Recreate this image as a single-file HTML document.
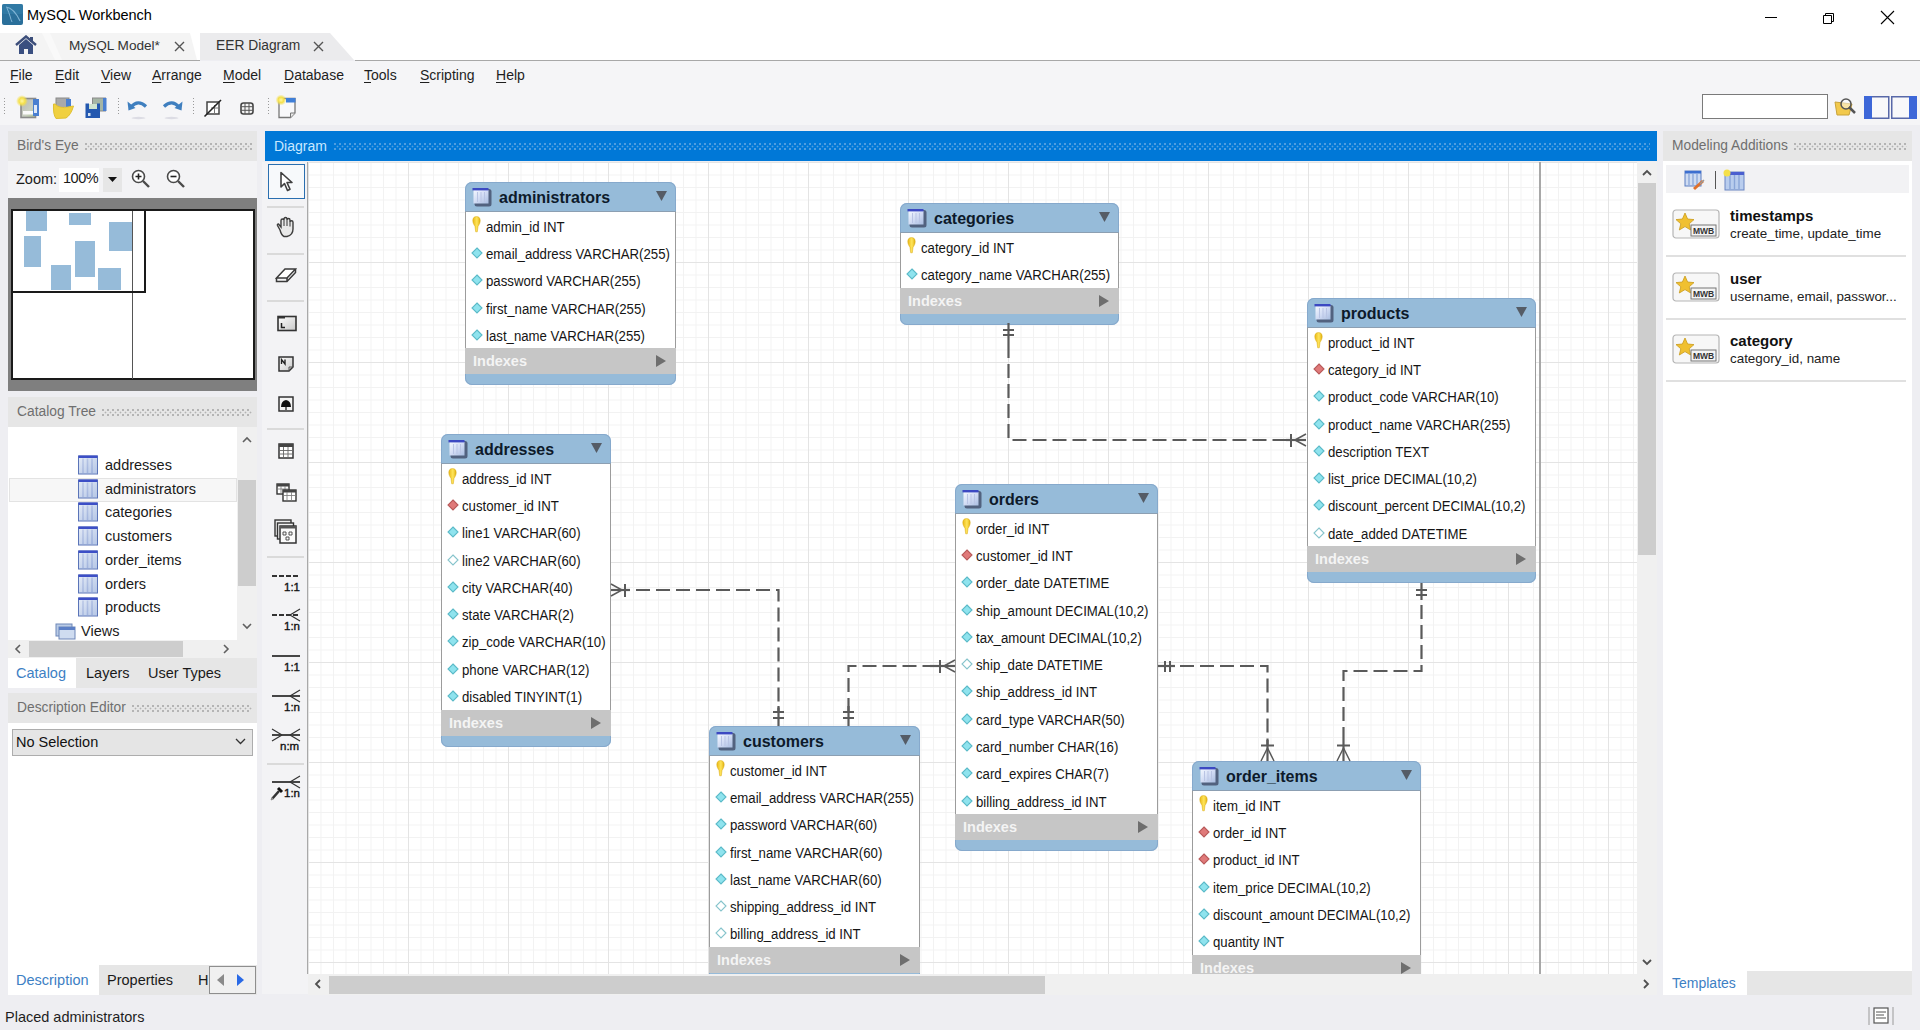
<!DOCTYPE html><html><head><meta charset="utf-8"><title>MySQL Workbench</title><style>
*{margin:0;padding:0;box-sizing:border-box}
html,body{width:1920px;height:1030px;overflow:hidden;background:#eeeef2;font-family:"Liberation Sans",sans-serif;color:#000}
.a{position:absolute}
.t{position:absolute;white-space:nowrap;line-height:1}
</style></head><body><div class="a" style="left:0px;top:0px;width:1920px;height:33px;background:#fff"></div><svg class="a" style="left:2px;top:4px" width="21" height="21" viewBox="0 0 21 21">
<rect x="0" y="0" width="21" height="21" rx="2" fill="#2a6f9a"/>
<rect x="0" y="0" width="21" height="10" rx="2" fill="#3580ac" opacity=".6"/>
<path d="M4 3 Q12 4 18 17" stroke="#7fb3d4" stroke-width="1.2" fill="none"/>
<path d="M5 4 Q7 9 8 12 Q9 16 10 18" stroke="#7fb3d4" stroke-width="1" fill="none"/>
</svg><div class="t" style="left:27px;top:8px;font-size:14.5px;color:#000">MySQL Workbench</div><div class="a" style="left:1765px;top:17px;width:12px;height:1px;background:#000"></div><svg class="a" style="left:1822px;top:11px" width="14" height="14" viewBox="0 0 14 14"><path d="M1.5 4.5h8v8h-8z M3.5 4.5v-2h8v8h-2" fill="none" stroke="#000" stroke-width="1"/></svg><svg class="a" style="left:1880px;top:10px" width="15" height="15" viewBox="0 0 15 15"><path d="M1 1L14 14M14 1L1 14" stroke="#000" stroke-width="1.1"/></svg><div class="a" style="left:0px;top:33px;width:1920px;height:27px;background:#fff"></div><svg class="a" style="left:0;top:33px" width="380" height="28" viewBox="0 0 380 28">
<path d="M0 0 H190 L197 27 H0 Z" fill="#f4f4f4"/>
<path d="M42 0 H50 L62 27 H55 Z" fill="#f9f9f9"/>
<path d="M200 0 H330 L354 27 H200 Z" fill="#ebebed"/>
</svg><div class="a" style="left:0px;top:60px;width:200px;height:1px;background:#a8a8a8"></div><div class="a" style="left:355px;top:60px;width:1565px;height:1px;background:#a8a8a8"></div><svg class="a" style="left:15px;top:35px" width="22" height="20" viewBox="0 0 22 20">
<path d="M1 10 L11 1.5 L21 10" fill="none" stroke="#3c4e7a" stroke-width="2.4"/>
<path d="M4 10 L11 4 L18 10 V19 H13 V14 H9 V19 H4 Z" fill="#3a4f80"/>
<rect x="15" y="2" width="3" height="5" fill="#3c4e7a"/>
</svg><div class="t" style="left:69px;top:39px;font-size:13.6px;color:#333">MySQL Model*</div><svg class="a" style="left:174px;top:41px" width="11" height="11" viewBox="0 0 11 11"><path d="M1 1L10 10M10 1L1 10" stroke="#555" stroke-width="1.4"/></svg><div class="t" style="left:216px;top:39px;font-size:13.8px;color:#333">EER Diagram</div><svg class="a" style="left:313px;top:41px" width="11" height="11" viewBox="0 0 11 11"><path d="M1 1L10 10M10 1L1 10" stroke="#555" stroke-width="1.4"/></svg><div class="a" style="left:0px;top:61px;width:1920px;height:64px;background:#f5f5f7"></div><div class="t" style="left:10px;top:68px;font-size:14px;color:#1e1e1e"><u style="text-decoration-thickness:1px;text-underline-offset:2px">F</u>ile</div><div class="t" style="left:55px;top:68px;font-size:14px;color:#1e1e1e"><u style="text-decoration-thickness:1px;text-underline-offset:2px">E</u>dit</div><div class="t" style="left:101px;top:68px;font-size:14px;color:#1e1e1e"><u style="text-decoration-thickness:1px;text-underline-offset:2px">V</u>iew</div><div class="t" style="left:152px;top:68px;font-size:14px;color:#1e1e1e"><u style="text-decoration-thickness:1px;text-underline-offset:2px">A</u>rrange</div><div class="t" style="left:223px;top:68px;font-size:14px;color:#1e1e1e"><u style="text-decoration-thickness:1px;text-underline-offset:2px">M</u>odel</div><div class="t" style="left:284px;top:68px;font-size:14px;color:#1e1e1e"><u style="text-decoration-thickness:1px;text-underline-offset:2px">D</u>atabase</div><div class="t" style="left:364px;top:68px;font-size:14px;color:#1e1e1e"><u style="text-decoration-thickness:1px;text-underline-offset:2px">T</u>ools</div><div class="t" style="left:420px;top:68px;font-size:14px;color:#1e1e1e"><u style="text-decoration-thickness:1px;text-underline-offset:2px">S</u>cripting</div><div class="t" style="left:496px;top:68px;font-size:14px;color:#1e1e1e"><u style="text-decoration-thickness:1px;text-underline-offset:2px">H</u>elp</div><div class="a" style="left:4px;top:98px;width:1px;height:18px;background-image:linear-gradient(#9a9a9a 50%,transparent 50%);background-size:1px 3px"></div><div class="a" style="left:118px;top:98px;width:1px;height:18px;background-image:linear-gradient(#9a9a9a 50%,transparent 50%);background-size:1px 3px"></div><div class="a" style="left:193px;top:98px;width:1px;height:18px;background-image:linear-gradient(#9a9a9a 50%,transparent 50%);background-size:1px 3px"></div><div class="a" style="left:268px;top:98px;width:1px;height:18px;background-image:linear-gradient(#9a9a9a 50%,transparent 50%);background-size:1px 3px"></div><svg width="0" height="0" style="position:absolute"><defs>
<linearGradient id="tg1" x1="0" y1="0" x2="1" y2="1"><stop offset="0" stop-color="#b8b8b8"/><stop offset=".6" stop-color="#c9cfc0"/><stop offset="1" stop-color="#a8c090"/></linearGradient>
<radialGradient id="star" cx=".5" cy=".5" r=".5"><stop offset="0" stop-color="#fff7a0"/><stop offset=".5" stop-color="#f5e04a"/><stop offset="1" stop-color="#f5e04a" stop-opacity="0"/></radialGradient>
</defs></svg><svg class="a" style="left:16px;top:95px" width="26" height="26" viewBox="0 0 26 26">
<rect x="5" y="3.5" width="14.5" height="19" fill="url(#tg1)" stroke="#8a8a8a" stroke-width="1.6"/><rect x="7" y="16" width="11" height="3.5" fill="#fafafa"/>
<rect x="17" y="4" width="6" height="17" fill="#4a7fd0"/><rect x="18" y="10" width="3" height="8" fill="#dfe9f7"/>
<circle cx="6" cy="6" r="6" fill="url(#star)"/></svg><svg class="a" style="left:51px;top:95px" width="24" height="26" viewBox="0 0 24 26">
<rect x="5" y="3" width="13" height="13" fill="#a9a9a9" stroke="#8a8a8a"/><rect x="15" y="4" width="5" height="9" fill="#4a7fd0"/><rect x="8" y="12" width="9" height="3" fill="#e8eadc"/>
<path d="M2.5 9 Q2 20 5 23.5 L15 23 Q20 20 22.5 11 L17 12 Q9 14 4 9Z" fill="#f0d040" stroke="#e0c030" stroke-width="1"/></svg><svg class="a" style="left:84px;top:95px" width="24" height="26" viewBox="0 0 24 26">
<rect x="8.5" y="3" width="13" height="13" fill="#a5b5a5" stroke="#8a8a8a"/><rect x="19" y="3" width="3.5" height="13" fill="#4a7fd0"/>
<path d="M1.5 8.5H5V14H13V8.5H16V23H1.5Z" fill="#2458b0"/><rect x="5" y="9" width="8" height="5" fill="#cfe4d0"/><rect x="4" y="18" width="2.5" height="3" fill="#d0dff2"/></svg><svg class="a" style="left:126px;top:98px" width="24" height="24" viewBox="0 0 24 24">
<path d="M5 9 Q12 1 20 8.5" stroke="#3f7fbf" stroke-width="3.2" fill="none"/><path d="M1.5 3.5 L2.5 12.5 L9.5 10 Z" fill="#3f7fbf"/>
<ellipse cx="12.5" cy="20" rx="7" ry="1.2" fill="#dcdce4"/></svg><svg class="a" style="left:160px;top:98px" width="24" height="24" viewBox="0 0 24 24">
<path d="M19 9 Q12 1 4 8.5" stroke="#3f7fbf" stroke-width="3.2" fill="none"/><path d="M22.5 3.5 L21.5 12.5 L14.5 10 Z" fill="#3f7fbf"/>
<ellipse cx="11.5" cy="20" rx="7" ry="1.2" fill="#dcdce4"/></svg><svg class="a" style="left:203px;top:99px" width="20" height="19" viewBox="0 0 20 19">
<rect x="4" y="3" width="12" height="12" fill="#fff" stroke="#444" stroke-width="1.5"/><path d="M8 9H15M11.5 6V15" stroke="#777" stroke-width="1"/><path d="M1.5 17.5 L18 1" stroke="#222" stroke-width="1.6"/></svg><svg class="a" style="left:240px;top:102px" width="14" height="13" viewBox="0 0 14 13">
<rect x="1" y="1" width="12" height="11" rx="2.5" fill="#f4f4f4" stroke="#454545" stroke-width="1.6"/><path d="M1 4.7H13M1 8.3H13M5 1V12M9 1V12" stroke="#555" stroke-width="1"/></svg><svg class="a" style="left:275px;top:95px" width="22" height="24" viewBox="0 0 22 24">
<path d="M4 3.5 H20 V18 L15.5 22.5 H4 Z" fill="#f8f8fa" stroke="#777" stroke-width="1.3"/><path d="M15.5 22.5 V18 H20" fill="#e8e8e8" stroke="#777" stroke-width="1"/><rect x="11" y="3" width="9.5" height="4.5" fill="#3f7fd8"/>
<circle cx="6" cy="5" r="5.5" fill="url(#star)"/></svg><div class="a" style="left:1702px;top:94px;width:126px;height:25px;background:#fff;border:1px solid #7a7a7a"></div><svg class="a" style="left:1834px;top:96px" width="24" height="22" viewBox="0 0 24 22">
<path d="M1 6 L3 19 H15 L18 8 Z" fill="#f2c94c" stroke="#c9a33a"/><circle cx="12" cy="8" r="5" fill="#fff" fill-opacity=".5" stroke="#555" stroke-width="1.5"/><path d="M15 11 L21 17" stroke="#555" stroke-width="2.5"/>
</svg><svg class="a" style="left:1864px;top:96px" width="54" height="23" viewBox="0 0 54 23">
<rect x="0.75" y="0.75" width="24" height="21.5" fill="#f8f8fa" stroke="#5868a8" stroke-width="1.5"/><rect x="0" y="0" width="8" height="23" fill="#3d67d8"/>
<rect x="27.75" y="0.75" width="24" height="21.5" fill="#f8f8fa" stroke="#5868a8" stroke-width="1.5"/><rect x="45" y="0" width="8" height="23" fill="#3d67d8"/>
</svg><div class="a" style="left:8px;top:131px;width:249px;height:30px;background:#e6e6e6"></div><div class="t" style="left:17px;top:139px;font-size:13.8px;color:#6f6f6f">Bird's Eye</div><div class="a" style="left:85px;top:143px;width:167px;height:7px;background-image:radial-gradient(circle at 1px 1px,#b4b4b4 0.8px,transparent 1.1px),radial-gradient(circle at 3.5px 3.5px,#b4b4b4 0.8px,transparent 1.1px);background-size:5px 5px"></div><div class="a" style="left:8px;top:161px;width:249px;height:37px;background:#f3f3f5"></div><div class="t" style="left:16px;top:172px;font-size:14.5px;color:#1a1a1a">Zoom:</div><div class="a" style="left:59px;top:168px;width:40px;height:24px;background:#fff"></div><div class="t" style="left:63px;top:171px;font-size:14.5px;color:#1a1a1a;letter-spacing:-0.5px">100%</div><div class="a" style="left:103px;top:168px;width:19px;height:24px;background:#e6e6e6"></div><svg class="a" style="left:108px;top:177px" width="9" height="5"><path d="M0 0H9L4.5 5Z" fill="#111"/></svg><svg class="a" style="left:131px;top:169px" width="20" height="20" viewBox="0 0 20 20">
<circle cx="7.5" cy="7.5" r="6" fill="#fff" stroke="#4a4a4a" stroke-width="1.6"/>
<path d="M12 12L18 18" stroke="#4a4a4a" stroke-width="2.4"/>
<path d="M4.5 7.5H10.5M7.5 4.5V10.5" stroke="#222" stroke-width="1.6"/></svg><svg class="a" style="left:166px;top:169px" width="20" height="20" viewBox="0 0 20 20">
<circle cx="7.5" cy="7.5" r="6" fill="#fff" stroke="#4a4a4a" stroke-width="1.6"/>
<path d="M12 12L18 18" stroke="#4a4a4a" stroke-width="2.4"/>
<path d="M4.5 7.5H10.5" stroke="#222" stroke-width="1.6"/></svg><div class="a" style="left:8px;top:198px;width:249px;height:193px;background:#7f7f7f"></div><div class="a" style="left:11px;top:209px;width:244px;height:171px;background:#fff;border:2px solid #1a1a1a"></div><div class="a" style="left:132px;top:210px;width:1px;height:169px;background:#555"></div><div class="a" style="left:26px;top:211px;width:21px;height:20px;background:#96bbd9"></div><div class="a" style="left:69px;top:213px;width:22px;height:12px;background:#96bbd9"></div><div class="a" style="left:109px;top:222px;width:23px;height:29px;background:#96bbd9"></div><div class="a" style="left:24px;top:236px;width:17px;height:31px;background:#96bbd9"></div><div class="a" style="left:75px;top:241px;width:20px;height:36px;background:#96bbd9"></div><div class="a" style="left:51px;top:265px;width:20px;height:25px;background:#96bbd9"></div><div class="a" style="left:98px;top:268px;width:23px;height:22px;background:#96bbd9"></div><div class="a" style="left:11px;top:209px;width:135px;height:84px;border:2px solid #1a1a1a"></div><div class="a" style="left:8px;top:397px;width:249px;height:30px;background:#e6e6e6"></div><div class="t" style="left:17px;top:405px;font-size:13.8px;color:#6f6f6f">Catalog Tree</div><div class="a" style="left:102px;top:409px;width:150px;height:7px;background-image:radial-gradient(circle at 1px 1px,#b4b4b4 0.8px,transparent 1.1px),radial-gradient(circle at 3.5px 3.5px,#b4b4b4 0.8px,transparent 1.1px);background-size:5px 5px"></div><div class="a" style="left:8px;top:427px;width:249px;height:213px;background:#fff"></div><div class="a" style="left:9px;top:478px;width:228px;height:24px;background:#f7f7f7;border:1px solid #e3e3e3"></div><svg width="0" height="0" style="position:absolute"><defs><linearGradient id="g1" x1="0" y1="0" x2="1" y2="1"><stop offset="0" stop-color="#fff"/><stop offset="1" stop-color="#9fb3dc"/></linearGradient></defs></svg><svg class="a" style="left:78px;top:455px" width="20" height="20" viewBox="0 0 20 20">
<rect x="0.5" y="1" width="19" height="18" fill="#c9d7ee" stroke="#5a74b8" stroke-width="1"/>
<rect x="0.5" y="0.5" width="19" height="2.5" fill="#3d4fc6"/>
<path d="M5 3.5V18M9.5 3.5V18M14 3.5V18" stroke="#8ea4d6" stroke-width="1.6"/>
<rect x="1" y="3" width="18" height="15" fill="url(#g1)" opacity=".45"/>
</svg><div class="t" style="left:105px;top:458px;font-size:14.5px;color:#1a1a1a">addresses</div><svg class="a" style="left:78px;top:479px" width="20" height="20" viewBox="0 0 20 20">
<rect x="0.5" y="1" width="19" height="18" fill="#c9d7ee" stroke="#5a74b8" stroke-width="1"/>
<rect x="0.5" y="0.5" width="19" height="2.5" fill="#3d4fc6"/>
<path d="M5 3.5V18M9.5 3.5V18M14 3.5V18" stroke="#8ea4d6" stroke-width="1.6"/>
<rect x="1" y="3" width="18" height="15" fill="url(#g1)" opacity=".45"/>
</svg><div class="t" style="left:105px;top:482px;font-size:14.5px;color:#1a1a1a">administrators</div><svg class="a" style="left:78px;top:502px" width="20" height="20" viewBox="0 0 20 20">
<rect x="0.5" y="1" width="19" height="18" fill="#c9d7ee" stroke="#5a74b8" stroke-width="1"/>
<rect x="0.5" y="0.5" width="19" height="2.5" fill="#3d4fc6"/>
<path d="M5 3.5V18M9.5 3.5V18M14 3.5V18" stroke="#8ea4d6" stroke-width="1.6"/>
<rect x="1" y="3" width="18" height="15" fill="url(#g1)" opacity=".45"/>
</svg><div class="t" style="left:105px;top:505px;font-size:14.5px;color:#1a1a1a">categories</div><svg class="a" style="left:78px;top:526px" width="20" height="20" viewBox="0 0 20 20">
<rect x="0.5" y="1" width="19" height="18" fill="#c9d7ee" stroke="#5a74b8" stroke-width="1"/>
<rect x="0.5" y="0.5" width="19" height="2.5" fill="#3d4fc6"/>
<path d="M5 3.5V18M9.5 3.5V18M14 3.5V18" stroke="#8ea4d6" stroke-width="1.6"/>
<rect x="1" y="3" width="18" height="15" fill="url(#g1)" opacity=".45"/>
</svg><div class="t" style="left:105px;top:529px;font-size:14.5px;color:#1a1a1a">customers</div><svg class="a" style="left:78px;top:550px" width="20" height="20" viewBox="0 0 20 20">
<rect x="0.5" y="1" width="19" height="18" fill="#c9d7ee" stroke="#5a74b8" stroke-width="1"/>
<rect x="0.5" y="0.5" width="19" height="2.5" fill="#3d4fc6"/>
<path d="M5 3.5V18M9.5 3.5V18M14 3.5V18" stroke="#8ea4d6" stroke-width="1.6"/>
<rect x="1" y="3" width="18" height="15" fill="url(#g1)" opacity=".45"/>
</svg><div class="t" style="left:105px;top:553px;font-size:14.5px;color:#1a1a1a">order_items</div><svg class="a" style="left:78px;top:574px" width="20" height="20" viewBox="0 0 20 20">
<rect x="0.5" y="1" width="19" height="18" fill="#c9d7ee" stroke="#5a74b8" stroke-width="1"/>
<rect x="0.5" y="0.5" width="19" height="2.5" fill="#3d4fc6"/>
<path d="M5 3.5V18M9.5 3.5V18M14 3.5V18" stroke="#8ea4d6" stroke-width="1.6"/>
<rect x="1" y="3" width="18" height="15" fill="url(#g1)" opacity=".45"/>
</svg><div class="t" style="left:105px;top:577px;font-size:14.5px;color:#1a1a1a">orders</div><svg class="a" style="left:78px;top:597px" width="20" height="20" viewBox="0 0 20 20">
<rect x="0.5" y="1" width="19" height="18" fill="#c9d7ee" stroke="#5a74b8" stroke-width="1"/>
<rect x="0.5" y="0.5" width="19" height="2.5" fill="#3d4fc6"/>
<path d="M5 3.5V18M9.5 3.5V18M14 3.5V18" stroke="#8ea4d6" stroke-width="1.6"/>
<rect x="1" y="3" width="18" height="15" fill="url(#g1)" opacity=".45"/>
</svg><div class="t" style="left:105px;top:600px;font-size:14.5px;color:#1a1a1a">products</div><svg class="a" style="left:55px;top:621px" width="21" height="19" viewBox="0 0 21 19">
<rect x="1" y="3" width="16" height="12" fill="#b9cbe6" stroke="#6e87b8"/><rect x="4" y="6" width="16" height="12" fill="#cfdcf0" stroke="#6e87b8"/><rect x="4" y="6" width="16" height="3" fill="#5b7fc6"/></svg><div class="t" style="left:81px;top:624px;font-size:14.5px;color:#1a1a1a">Views</div><div class="a" style="left:237px;top:427px;width:20px;height:213px;background:#f0f0f0"></div><div class="a" style="left:238px;top:480px;width:18px;height:106px;background:#cdcdcd"></div><svg class="a" style="left:242px;top:436px" width="10" height="7"><path d="M1 6L5 2L9 6" fill="none" stroke="#606060" stroke-width="1.6"/></svg><svg class="a" style="left:242px;top:623px" width="10" height="7"><path d="M1 1L5 5L9 1" fill="none" stroke="#606060" stroke-width="1.6"/></svg><div class="a" style="left:8px;top:640px;width:249px;height:18px;background:#f0f0f0"></div><div class="a" style="left:29px;top:641px;width:154px;height:16px;background:#cdcdcd"></div><svg class="a" style="left:14px;top:644px" width="7" height="10"><path d="M6 1L2 5L6 9" fill="none" stroke="#606060" stroke-width="1.6"/></svg><svg class="a" style="left:223px;top:644px" width="7" height="10"><path d="M1 1L5 5L1 9" fill="none" stroke="#606060" stroke-width="1.6"/></svg><div class="a" style="left:8px;top:658px;width:249px;height:30px;background:#e6e6e6"></div><div class="a" style="left:8px;top:658px;width:68px;height:30px;background:#fff"></div><div class="t" style="left:16px;top:666px;font-size:14.5px;color:#3d80c4">Catalog</div><div class="t" style="left:86px;top:666px;font-size:14.5px;color:#1a1a1a">Layers</div><div class="t" style="left:148px;top:666px;font-size:14.5px;color:#1a1a1a">User Types</div><div class="a" style="left:8px;top:693px;width:249px;height:30px;background:#e6e6e6"></div><div class="t" style="left:17px;top:701px;font-size:13.8px;color:#6f6f6f">Description Editor</div><div class="a" style="left:132px;top:705px;width:120px;height:7px;background-image:radial-gradient(circle at 1px 1px,#b4b4b4 0.8px,transparent 1.1px),radial-gradient(circle at 3.5px 3.5px,#b4b4b4 0.8px,transparent 1.1px);background-size:5px 5px"></div><div class="a" style="left:8px;top:723px;width:249px;height:242px;background:#fff"></div><div class="a" style="left:12px;top:729px;width:241px;height:27px;background:#e5e5e5;border:1px solid #adadad"></div><div class="t" style="left:16px;top:735px;font-size:14.5px;color:#111">No Selection</div><svg class="a" style="left:235px;top:738px" width="11" height="7"><path d="M1 1L5.5 5.5L10 1" fill="none" stroke="#333" stroke-width="1.3"/></svg><div class="a" style="left:8px;top:965px;width:249px;height:30px;background:#e6e6e6"></div><div class="a" style="left:8px;top:965px;width:91px;height:30px;background:#fff"></div><div class="t" style="left:16px;top:973px;font-size:14.5px;color:#3d80c4">Description</div><div class="t" style="left:107px;top:973px;font-size:14.5px;color:#1a1a1a">Properties</div><div class="t" style="left:198px;top:973px;font-size:14.5px;color:#1a1a1a">H</div><div class="a" style="left:209px;top:966px;width:47px;height:28px;background:#f0f0f0;border:1px solid #8e8e8e"></div><svg class="a" style="left:215px;top:973px" width="36" height="14"><path d="M9 1L2 7L9 13Z" fill="#8a8a8a"/><path d="M22 1L29 7L22 13Z" fill="#2a6ae6"/></svg><div class="t" style="left:5px;top:1010px;font-size:14.5px;color:#1e1e1e">Placed administrators</div><svg class="a" style="left:1868px;top:1006px" width="26" height="20" viewBox="0 0 26 20">
<path d="M1 1V19M25 1V19" stroke="#9a9a9a"/><rect x="6" y="2" width="14" height="15" fill="#fff" stroke="#555" stroke-width="1.2"/>
<path d="M8 6H18M8 9H16M8 12H18" stroke="#555" stroke-width="1"/></svg><div class="a" style="left:265px;top:131px;width:1392px;height:30px;background:#0078d7"></div><div class="t" style="left:274px;top:139px;font-size:14px;color:#c8e8ff">Diagram</div><div class="a" style="left:334px;top:143px;width:1316px;height:7px;background-image:radial-gradient(circle at 1px 1px,#4f9de0 0.8px,transparent 1.1px),radial-gradient(circle at 3.5px 3.5px,#4f9de0 0.8px,transparent 1.1px);background-size:5px 5px"></div><div class="a" style="left:262px;top:162px;width:46px;height:832px;background:#f3f3f5"></div><div class="a" style="left:307px;top:162px;width:1px;height:812px;background:#a9a9a9"></div><div class="a" style="left:308px;top:162px;width:1329px;height:812px;background-color:#fff;background-image:linear-gradient(90deg,#e4e4e4 1px,transparent 1px),linear-gradient(#e4e4e4 1px,transparent 1px),linear-gradient(90deg,#f2f2f2 1px,transparent 1px),linear-gradient(#f2f2f2 1px,transparent 1px);background-size:100px 100px,100px 100px,12.5px 12.5px,12.5px 12.5px;background-position:0 0,0 0,0 0,0 0"></div><div class="a" style="left:1539px;top:162px;width:2px;height:812px;background:#a8a8a8"></div><div class="a" style="left:1637px;top:162px;width:20px;height:812px;background:#f0f0f0"></div><div class="a" style="left:1638px;top:183px;width:18px;height:372px;background:#cdcdcd"></div><svg class="a" style="left:1642px;top:169px" width="10" height="7"><path d="M1 6L5 2L9 6" fill="none" stroke="#505050" stroke-width="1.8"/></svg><svg class="a" style="left:1642px;top:959px" width="10" height="7"><path d="M1 1L5 5L9 1" fill="none" stroke="#505050" stroke-width="1.8"/></svg><div class="a" style="left:308px;top:974px;width:1349px;height:21px;background:#f0f0f0"></div><div class="a" style="left:329px;top:976px;width:716px;height:18px;background:#cdcdcd"></div><svg class="a" style="left:314px;top:979px" width="7" height="10"><path d="M6 1L2 5L6 9" fill="none" stroke="#505050" stroke-width="1.8"/></svg><svg class="a" style="left:1643px;top:979px" width="7" height="10"><path d="M1 1L5 5L1 9" fill="none" stroke="#505050" stroke-width="1.8"/></svg><div class="a" style="left:268px;top:164px;width:37px;height:35px;background:#f7f9fb;border:1.5px solid #2a6fb0"></div><div class="a" style="left:267px;top:206px;width:37px;height:2px;background:#dadada"></div><div class="a" style="left:267px;top:253px;width:37px;height:2px;background:#dadada"></div><div class="a" style="left:267px;top:300px;width:37px;height:2px;background:#dadada"></div><div class="a" style="left:267px;top:428px;width:37px;height:2px;background:#dadada"></div><div class="a" style="left:267px;top:556px;width:37px;height:2px;background:#dadada"></div><div class="a" style="left:267px;top:763px;width:37px;height:2px;background:#dadada"></div><svg class="a" style="left:279px;top:171px" width="16" height="22" viewBox="0 0 16 22"><path d="M2 1.5V16L5.5 12.5L8.5 19.5L11 18.3L8 11.5H13Z" fill="#fff" stroke="#404040" stroke-width="1.6" stroke-linejoin="round"/></svg><svg class="a" style="left:275px;top:216px" width="22" height="22" viewBox="0 0 22 22"><path d="M5 14 L2.5 9.5 Q2 8 3.5 8 L6 11 V4.5 Q6 3 7.5 3 Q9 3 9 4.5 V3 Q9 1.5 10.5 1.5 Q12 1.5 12 3 V4 Q12 2.5 13.5 2.5 Q15 2.5 15 4 V6 Q15 4.8 16.5 4.8 Q18 4.8 18 6.3 V13 Q18 19 12 20.5 H9 Q6.5 19.5 5 14Z" fill="#e8e8e8" stroke="#3c3c3c" stroke-width="1.4"/><path d="M9 4.5V10M12 4V10M15 6V10.5" stroke="#444" stroke-width="1.1"/></svg><svg class="a" style="left:275px;top:266px" width="22" height="18" viewBox="0 0 22 18"><path d="M1.5 12 L10 3 H20.5 L12 12 Z" fill="#fff" stroke="#3a3a3a" stroke-width="1.5"/><path d="M1.5 12 V15.5 H12 L20.5 6.5 V3 M12 12 V15.5" fill="none" stroke="#3a3a3a" stroke-width="1.5"/></svg><svg class="a" style="left:277px;top:315px" width="20" height="17" viewBox="0 0 20 17"><defs><linearGradient id="pg" x1="0" y1="0" x2="1" y2="1"><stop offset="0" stop-color="#fff"/><stop offset="1" stop-color="#c8c8c8"/></linearGradient></defs><rect x="1" y="1.5" width="18" height="14" fill="url(#pg)" stroke="#333" stroke-width="1.6"/><path d="M1 2.5H8" stroke="#333" stroke-width="2"/><path d="M4.5 8V12.5H8" fill="none" stroke="#222" stroke-width="1.5"/></svg><svg class="a" style="left:278px;top:356px" width="16" height="16" viewBox="0 0 16 16"><path d="M1 1H15V11L11 15H1Z" fill="url(#pg)" stroke="#333" stroke-width="1.5"/><path d="M11 15V11H15" fill="none" stroke="#555" stroke-width="1"/><path d="M3.5 8V3.5L7 8V3.5" fill="none" stroke="#222" stroke-width="1.4"/></svg><svg class="a" style="left:278px;top:396px" width="16" height="16" viewBox="0 0 16 16"><rect x="1" y="1" width="14" height="14" fill="#f4f4f4" stroke="#333" stroke-width="1.5"/><path d="M3 11 Q3 5 8 4 Q13 5 13 11Z" fill="#111"/><path d="M8 10V14" stroke="#111" stroke-width="1.2"/></svg><svg class="a" style="left:278px;top:443px" width="16" height="16" viewBox="0 0 16 16"><rect x="1" y="1" width="14" height="14" fill="#fff" stroke="#333" stroke-width="1.5"/><rect x="1" y="1" width="14" height="3" fill="#444"/><path d="M1 7.5H15M1 11H15M5.5 4V15M10 4V15" stroke="#666" stroke-width=".9"/></svg><svg class="a" style="left:276px;top:483px" width="21" height="19" viewBox="0 0 21 19"><rect x="1" y="1" width="12" height="10" fill="#fff" stroke="#333" stroke-width="1.4"/><rect x="1" y="1" width="12" height="2.5" fill="#444"/><path d="M1 6H13M5 3V11M9 3V11" stroke="#777" stroke-width=".8"/><rect x="7" y="7" width="13" height="11" fill="#fff" stroke="#333" stroke-width="1.4"/><rect x="7" y="7" width="13" height="2.5" fill="#444"/><path d="M7 12.5H20M11 9V18M15.5 9V18" stroke="#777" stroke-width=".8"/></svg><svg class="a" style="left:274px;top:519px" width="23" height="25" viewBox="0 0 23 25"><rect x="1" y="1" width="16" height="16" fill="#eee" stroke="#333" stroke-width="1.4"/><rect x="3.5" y="4" width="16" height="16" fill="#f2f2f2" stroke="#333" stroke-width="1.4"/><rect x="6" y="7" width="16" height="17" fill="#fafafa" stroke="#333" stroke-width="1.5"/><rect x="6" y="7" width="16" height="2.5" fill="#555"/><path d="M9 13h3v3h-3zM15 13h3v3h-3zM12 18h3v3h-3z" fill="none" stroke="#444" stroke-width=".9"/></svg><svg class="a" style="left:270px;top:568px" width="34" height="26" viewBox="0 0 34 26"><path d="M2 8H30" stroke="#333" stroke-width="1.8" stroke-dasharray="5 2"/><text x="14" y="23" font-family="Liberation Sans" font-size="11.5" fill="#111" stroke="#111" stroke-width=".35">1:1</text></svg><svg class="a" style="left:270px;top:607px" width="34" height="26" viewBox="0 0 34 26"><path d="M2 8H30" stroke="#333" stroke-width="1.8" stroke-dasharray="5 2"/><path d="M20 8L30 2M20 8L30 14" stroke="#333" stroke-width="1.2" fill="none"/><text x="14" y="23" font-family="Liberation Sans" font-size="11.5" fill="#111" stroke="#111" stroke-width=".35">1:n</text></svg><svg class="a" style="left:270px;top:648px" width="34" height="26" viewBox="0 0 34 26"><path d="M2 8H30" stroke="#333" stroke-width="1.8" /><text x="14" y="23" font-family="Liberation Sans" font-size="11.5" fill="#111" stroke="#111" stroke-width=".35">1:1</text></svg><svg class="a" style="left:270px;top:688px" width="34" height="26" viewBox="0 0 34 26"><path d="M2 8H30" stroke="#333" stroke-width="1.8" /><path d="M20 8L30 2M20 8L30 14" stroke="#333" stroke-width="1.2" fill="none"/><text x="14" y="23" font-family="Liberation Sans" font-size="11.5" fill="#111" stroke="#111" stroke-width=".35">1:n</text></svg><svg class="a" style="left:270px;top:727px" width="34" height="26" viewBox="0 0 34 26"><path d="M2 8H30" stroke="#333" stroke-width="1.8" /><path d="M20 8L30 2M20 8L30 14" stroke="#333" stroke-width="1.2" fill="none"/><path d="M12 8L2 2M12 8L2 14" stroke="#333" stroke-width="1.2" fill="none"/><text x="10" y="23" font-family="Liberation Sans" font-size="11.5" fill="#111" stroke="#111" stroke-width=".35">n:m</text></svg><svg class="a" style="left:270px;top:774px" width="34" height="26" viewBox="0 0 34 26"><path d="M2 8H30" stroke="#333" stroke-width="1.8" /><path d="M20 8L30 2M20 8L30 14" stroke="#333" stroke-width="1.2" fill="none"/><text x="14" y="23" font-family="Liberation Sans" font-size="11.5" fill="#111" stroke="#111" stroke-width=".35">1:n</text></svg><svg class="a" style="left:270px;top:785px" width="14" height="16" viewBox="0 0 14 16"><path d="M2 14L9 6" stroke="#333" stroke-width="2.5"/><path d="M8 3L12 7" stroke="#111" stroke-width="3"/><path d="M1 15L3 13" stroke="#888" stroke-width="1.5"/></svg><div class="a" style="left:465px;top:182px;width:211px;height:203px;overflow:hidden"><div class="a" style="left:0;top:0;width:211px;height:203px;background:#96bbd9;border-radius:7px;box-shadow:inset 0 0 0 1px #86a9cc"></div><div class="a" style="left:0;top:29px;width:211px;height:1px;background:#8c9fb2"></div><div class="a" style="left:0;top:30px;width:211px;height:136px;background:#fff;border-left:1px solid #9c9c9c;border-right:1px solid #9c9c9c"></div><div class="a" style="left:0;top:166px;width:211px;height:26px;background:#c6c6c6"></div><div class="t" style="left:8px;top:172px;font-size:14.5px;font-weight:bold;color:#f4f4f4">Indexes</div><svg class="a" style="left:190px;top:173px" width="11" height="12"><path d="M1 0L11 6L1 12Z" fill="#6e6e6e"/></svg><svg class="a" style="left:6px;top:5px" width="21" height="21" viewBox="0 0 21 21"><defs><linearGradient id="tig" x1="0" y1="0" x2="1" y2="1"><stop offset="0" stop-color="#f4f8ff"/><stop offset=".5" stop-color="#d2dcf4"/><stop offset="1" stop-color="#a9bde0"/></linearGradient></defs><rect x="3.5" y="2" width="17" height="17.5" rx="2.5" fill="#52627f"/><rect x="2.5" y="3" width="15" height="13.5" fill="url(#tig)"/><rect x="1.5" y="1" width="16" height="2.4" fill="#3c49c2"/><path d="M6.5 5V15M10 5V15M13.5 5V15" stroke="#b9c4e4" stroke-width="1"/></svg><div class="t" style="left:34px;top:8px;font-size:16px;font-weight:bold;color:#0d1a2a">administrators</div><svg class="a" style="left:191px;top:9px" width="11" height="10"><path d="M0 0H11L5.5 10Z" fill="#555c66"/></svg><svg class="a" style="left:7px;top:34px" width="9" height="17" viewBox="0 0 9 17"><defs><linearGradient id="kg" x1="0" x2="1"><stop offset="0" stop-color="#e9b818"/><stop offset=".55" stop-color="#ffe55a"/><stop offset="1" stop-color="#e0b010"/></linearGradient></defs><path d="M4.5 0.6C7 0.6 8.2 2.2 8.2 4.6 8.2 7 7 8.8 6 10.5L5.3 15.8H3.7L3 10.5C2 8.8 0.8 7 0.8 4.6 0.8 2.2 2 0.6 4.5 0.6Z" fill="url(#kg)" stroke="#d8a810" stroke-width=".5"/></svg><div class="t" style="left:21px;top:38px;font-size:14px;color:#151515;transform:scaleX(0.943);transform-origin:0 0">admin_id INT</div><svg class="a" style="left:6px;top:65px" width="12" height="12" viewBox="0 0 12 12"><path d="M6 1L11 6L6 11L1 6Z" fill="#8fe3ee" stroke="#5bbac8" stroke-width="1.1"/></svg><div class="t" style="left:21px;top:65px;font-size:14px;color:#151515;transform:scaleX(0.943);transform-origin:0 0">email_address VARCHAR(255)</div><svg class="a" style="left:6px;top:92px" width="12" height="12" viewBox="0 0 12 12"><path d="M6 1L11 6L6 11L1 6Z" fill="#8fe3ee" stroke="#5bbac8" stroke-width="1.1"/></svg><div class="t" style="left:21px;top:92px;font-size:14px;color:#151515;transform:scaleX(0.943);transform-origin:0 0">password VARCHAR(255)</div><svg class="a" style="left:6px;top:120px" width="12" height="12" viewBox="0 0 12 12"><path d="M6 1L11 6L6 11L1 6Z" fill="#8fe3ee" stroke="#5bbac8" stroke-width="1.1"/></svg><div class="t" style="left:21px;top:120px;font-size:14px;color:#151515;transform:scaleX(0.943);transform-origin:0 0">first_name VARCHAR(255)</div><svg class="a" style="left:6px;top:147px" width="12" height="12" viewBox="0 0 12 12"><path d="M6 1L11 6L6 11L1 6Z" fill="#8fe3ee" stroke="#5bbac8" stroke-width="1.1"/></svg><div class="t" style="left:21px;top:147px;font-size:14px;color:#151515;transform:scaleX(0.943);transform-origin:0 0">last_name VARCHAR(255)</div></div><div class="a" style="left:900px;top:203px;width:219px;height:122px;overflow:hidden"><div class="a" style="left:0;top:0;width:219px;height:122px;background:#96bbd9;border-radius:7px;box-shadow:inset 0 0 0 1px #86a9cc"></div><div class="a" style="left:0;top:29px;width:219px;height:1px;background:#8c9fb2"></div><div class="a" style="left:0;top:30px;width:219px;height:55px;background:#fff;border-left:1px solid #9c9c9c;border-right:1px solid #9c9c9c"></div><div class="a" style="left:0;top:85px;width:219px;height:26px;background:#c6c6c6"></div><div class="t" style="left:8px;top:91px;font-size:14.5px;font-weight:bold;color:#f4f4f4">Indexes</div><svg class="a" style="left:198px;top:92px" width="11" height="12"><path d="M1 0L11 6L1 12Z" fill="#6e6e6e"/></svg><svg class="a" style="left:6px;top:5px" width="21" height="21" viewBox="0 0 21 21"><defs><linearGradient id="tig" x1="0" y1="0" x2="1" y2="1"><stop offset="0" stop-color="#f4f8ff"/><stop offset=".5" stop-color="#d2dcf4"/><stop offset="1" stop-color="#a9bde0"/></linearGradient></defs><rect x="3.5" y="2" width="17" height="17.5" rx="2.5" fill="#52627f"/><rect x="2.5" y="3" width="15" height="13.5" fill="url(#tig)"/><rect x="1.5" y="1" width="16" height="2.4" fill="#3c49c2"/><path d="M6.5 5V15M10 5V15M13.5 5V15" stroke="#b9c4e4" stroke-width="1"/></svg><div class="t" style="left:34px;top:8px;font-size:16px;font-weight:bold;color:#0d1a2a">categories</div><svg class="a" style="left:199px;top:9px" width="11" height="10"><path d="M0 0H11L5.5 10Z" fill="#555c66"/></svg><svg class="a" style="left:7px;top:34px" width="9" height="17" viewBox="0 0 9 17"><defs><linearGradient id="kg" x1="0" x2="1"><stop offset="0" stop-color="#e9b818"/><stop offset=".55" stop-color="#ffe55a"/><stop offset="1" stop-color="#e0b010"/></linearGradient></defs><path d="M4.5 0.6C7 0.6 8.2 2.2 8.2 4.6 8.2 7 7 8.8 6 10.5L5.3 15.8H3.7L3 10.5C2 8.8 0.8 7 0.8 4.6 0.8 2.2 2 0.6 4.5 0.6Z" fill="url(#kg)" stroke="#d8a810" stroke-width=".5"/></svg><div class="t" style="left:21px;top:38px;font-size:14px;color:#151515;transform:scaleX(0.943);transform-origin:0 0">category_id INT</div><svg class="a" style="left:6px;top:65px" width="12" height="12" viewBox="0 0 12 12"><path d="M6 1L11 6L6 11L1 6Z" fill="#8fe3ee" stroke="#5bbac8" stroke-width="1.1"/></svg><div class="t" style="left:21px;top:65px;font-size:14px;color:#151515;transform:scaleX(0.943);transform-origin:0 0">category_name VARCHAR(255)</div></div><div class="a" style="left:1307px;top:298px;width:229px;height:285px;overflow:hidden"><div class="a" style="left:0;top:0;width:229px;height:285px;background:#96bbd9;border-radius:7px;box-shadow:inset 0 0 0 1px #86a9cc"></div><div class="a" style="left:0;top:29px;width:229px;height:1px;background:#8c9fb2"></div><div class="a" style="left:0;top:30px;width:229px;height:218px;background:#fff;border-left:1px solid #9c9c9c;border-right:1px solid #9c9c9c"></div><div class="a" style="left:0;top:248px;width:229px;height:26px;background:#c6c6c6"></div><div class="t" style="left:8px;top:254px;font-size:14.5px;font-weight:bold;color:#f4f4f4">Indexes</div><svg class="a" style="left:208px;top:255px" width="11" height="12"><path d="M1 0L11 6L1 12Z" fill="#6e6e6e"/></svg><svg class="a" style="left:6px;top:5px" width="21" height="21" viewBox="0 0 21 21"><defs><linearGradient id="tig" x1="0" y1="0" x2="1" y2="1"><stop offset="0" stop-color="#f4f8ff"/><stop offset=".5" stop-color="#d2dcf4"/><stop offset="1" stop-color="#a9bde0"/></linearGradient></defs><rect x="3.5" y="2" width="17" height="17.5" rx="2.5" fill="#52627f"/><rect x="2.5" y="3" width="15" height="13.5" fill="url(#tig)"/><rect x="1.5" y="1" width="16" height="2.4" fill="#3c49c2"/><path d="M6.5 5V15M10 5V15M13.5 5V15" stroke="#b9c4e4" stroke-width="1"/></svg><div class="t" style="left:34px;top:8px;font-size:16px;font-weight:bold;color:#0d1a2a">products</div><svg class="a" style="left:209px;top:9px" width="11" height="10"><path d="M0 0H11L5.5 10Z" fill="#555c66"/></svg><svg class="a" style="left:7px;top:34px" width="9" height="17" viewBox="0 0 9 17"><defs><linearGradient id="kg" x1="0" x2="1"><stop offset="0" stop-color="#e9b818"/><stop offset=".55" stop-color="#ffe55a"/><stop offset="1" stop-color="#e0b010"/></linearGradient></defs><path d="M4.5 0.6C7 0.6 8.2 2.2 8.2 4.6 8.2 7 7 8.8 6 10.5L5.3 15.8H3.7L3 10.5C2 8.8 0.8 7 0.8 4.6 0.8 2.2 2 0.6 4.5 0.6Z" fill="url(#kg)" stroke="#d8a810" stroke-width=".5"/></svg><div class="t" style="left:21px;top:38px;font-size:14px;color:#151515;transform:scaleX(0.943);transform-origin:0 0">product_id INT</div><svg class="a" style="left:6px;top:65px" width="12" height="12" viewBox="0 0 12 12"><path d="M6 1L11 6L6 11L1 6Z" fill="#e07a7a" stroke="#b85a5a" stroke-width="1.1"/></svg><div class="t" style="left:21px;top:65px;font-size:14px;color:#151515;transform:scaleX(0.943);transform-origin:0 0">category_id INT</div><svg class="a" style="left:6px;top:92px" width="12" height="12" viewBox="0 0 12 12"><path d="M6 1L11 6L6 11L1 6Z" fill="#8fe3ee" stroke="#5bbac8" stroke-width="1.1"/></svg><div class="t" style="left:21px;top:92px;font-size:14px;color:#151515;transform:scaleX(0.943);transform-origin:0 0">product_code VARCHAR(10)</div><svg class="a" style="left:6px;top:120px" width="12" height="12" viewBox="0 0 12 12"><path d="M6 1L11 6L6 11L1 6Z" fill="#8fe3ee" stroke="#5bbac8" stroke-width="1.1"/></svg><div class="t" style="left:21px;top:120px;font-size:14px;color:#151515;transform:scaleX(0.943);transform-origin:0 0">product_name VARCHAR(255)</div><svg class="a" style="left:6px;top:147px" width="12" height="12" viewBox="0 0 12 12"><path d="M6 1L11 6L6 11L1 6Z" fill="#8fe3ee" stroke="#5bbac8" stroke-width="1.1"/></svg><div class="t" style="left:21px;top:147px;font-size:14px;color:#151515;transform:scaleX(0.943);transform-origin:0 0">description TEXT</div><svg class="a" style="left:6px;top:174px" width="12" height="12" viewBox="0 0 12 12"><path d="M6 1L11 6L6 11L1 6Z" fill="#8fe3ee" stroke="#5bbac8" stroke-width="1.1"/></svg><div class="t" style="left:21px;top:174px;font-size:14px;color:#151515;transform:scaleX(0.943);transform-origin:0 0">list_price DECIMAL(10,2)</div><svg class="a" style="left:6px;top:201px" width="12" height="12" viewBox="0 0 12 12"><path d="M6 1L11 6L6 11L1 6Z" fill="#8fe3ee" stroke="#5bbac8" stroke-width="1.1"/></svg><div class="t" style="left:21px;top:201px;font-size:14px;color:#151515;transform:scaleX(0.943);transform-origin:0 0">discount_percent DECIMAL(10,2)</div><svg class="a" style="left:6px;top:229px" width="12" height="12" viewBox="0 0 12 12"><path d="M6 1L11 6L6 11L1 6Z" fill="#ffffff" stroke="#86c4cc" stroke-width="1.1"/></svg><div class="t" style="left:21px;top:229px;font-size:14px;color:#151515;transform:scaleX(0.943);transform-origin:0 0">date_added DATETIME</div></div><div class="a" style="left:441px;top:434px;width:170px;height:313px;overflow:hidden"><div class="a" style="left:0;top:0;width:170px;height:313px;background:#96bbd9;border-radius:7px;box-shadow:inset 0 0 0 1px #86a9cc"></div><div class="a" style="left:0;top:29px;width:170px;height:1px;background:#8c9fb2"></div><div class="a" style="left:0;top:30px;width:170px;height:246px;background:#fff;border-left:1px solid #9c9c9c;border-right:1px solid #9c9c9c"></div><div class="a" style="left:0;top:276px;width:170px;height:26px;background:#c6c6c6"></div><div class="t" style="left:8px;top:282px;font-size:14.5px;font-weight:bold;color:#f4f4f4">Indexes</div><svg class="a" style="left:149px;top:283px" width="11" height="12"><path d="M1 0L11 6L1 12Z" fill="#6e6e6e"/></svg><svg class="a" style="left:6px;top:5px" width="21" height="21" viewBox="0 0 21 21"><defs><linearGradient id="tig" x1="0" y1="0" x2="1" y2="1"><stop offset="0" stop-color="#f4f8ff"/><stop offset=".5" stop-color="#d2dcf4"/><stop offset="1" stop-color="#a9bde0"/></linearGradient></defs><rect x="3.5" y="2" width="17" height="17.5" rx="2.5" fill="#52627f"/><rect x="2.5" y="3" width="15" height="13.5" fill="url(#tig)"/><rect x="1.5" y="1" width="16" height="2.4" fill="#3c49c2"/><path d="M6.5 5V15M10 5V15M13.5 5V15" stroke="#b9c4e4" stroke-width="1"/></svg><div class="t" style="left:34px;top:8px;font-size:16px;font-weight:bold;color:#0d1a2a">addresses</div><svg class="a" style="left:150px;top:9px" width="11" height="10"><path d="M0 0H11L5.5 10Z" fill="#555c66"/></svg><svg class="a" style="left:7px;top:34px" width="9" height="17" viewBox="0 0 9 17"><defs><linearGradient id="kg" x1="0" x2="1"><stop offset="0" stop-color="#e9b818"/><stop offset=".55" stop-color="#ffe55a"/><stop offset="1" stop-color="#e0b010"/></linearGradient></defs><path d="M4.5 0.6C7 0.6 8.2 2.2 8.2 4.6 8.2 7 7 8.8 6 10.5L5.3 15.8H3.7L3 10.5C2 8.8 0.8 7 0.8 4.6 0.8 2.2 2 0.6 4.5 0.6Z" fill="url(#kg)" stroke="#d8a810" stroke-width=".5"/></svg><div class="t" style="left:21px;top:38px;font-size:14px;color:#151515;transform:scaleX(0.943);transform-origin:0 0">address_id INT</div><svg class="a" style="left:6px;top:65px" width="12" height="12" viewBox="0 0 12 12"><path d="M6 1L11 6L6 11L1 6Z" fill="#e07a7a" stroke="#b85a5a" stroke-width="1.1"/></svg><div class="t" style="left:21px;top:65px;font-size:14px;color:#151515;transform:scaleX(0.943);transform-origin:0 0">customer_id INT</div><svg class="a" style="left:6px;top:92px" width="12" height="12" viewBox="0 0 12 12"><path d="M6 1L11 6L6 11L1 6Z" fill="#8fe3ee" stroke="#5bbac8" stroke-width="1.1"/></svg><div class="t" style="left:21px;top:92px;font-size:14px;color:#151515;transform:scaleX(0.943);transform-origin:0 0">line1 VARCHAR(60)</div><svg class="a" style="left:6px;top:120px" width="12" height="12" viewBox="0 0 12 12"><path d="M6 1L11 6L6 11L1 6Z" fill="#ffffff" stroke="#86c4cc" stroke-width="1.1"/></svg><div class="t" style="left:21px;top:120px;font-size:14px;color:#151515;transform:scaleX(0.943);transform-origin:0 0">line2 VARCHAR(60)</div><svg class="a" style="left:6px;top:147px" width="12" height="12" viewBox="0 0 12 12"><path d="M6 1L11 6L6 11L1 6Z" fill="#8fe3ee" stroke="#5bbac8" stroke-width="1.1"/></svg><div class="t" style="left:21px;top:147px;font-size:14px;color:#151515;transform:scaleX(0.943);transform-origin:0 0">city VARCHAR(40)</div><svg class="a" style="left:6px;top:174px" width="12" height="12" viewBox="0 0 12 12"><path d="M6 1L11 6L6 11L1 6Z" fill="#8fe3ee" stroke="#5bbac8" stroke-width="1.1"/></svg><div class="t" style="left:21px;top:174px;font-size:14px;color:#151515;transform:scaleX(0.943);transform-origin:0 0">state VARCHAR(2)</div><svg class="a" style="left:6px;top:201px" width="12" height="12" viewBox="0 0 12 12"><path d="M6 1L11 6L6 11L1 6Z" fill="#8fe3ee" stroke="#5bbac8" stroke-width="1.1"/></svg><div class="t" style="left:21px;top:201px;font-size:14px;color:#151515;transform:scaleX(0.943);transform-origin:0 0">zip_code VARCHAR(10)</div><svg class="a" style="left:6px;top:229px" width="12" height="12" viewBox="0 0 12 12"><path d="M6 1L11 6L6 11L1 6Z" fill="#8fe3ee" stroke="#5bbac8" stroke-width="1.1"/></svg><div class="t" style="left:21px;top:229px;font-size:14px;color:#151515;transform:scaleX(0.943);transform-origin:0 0">phone VARCHAR(12)</div><svg class="a" style="left:6px;top:256px" width="12" height="12" viewBox="0 0 12 12"><path d="M6 1L11 6L6 11L1 6Z" fill="#8fe3ee" stroke="#5bbac8" stroke-width="1.1"/></svg><div class="t" style="left:21px;top:256px;font-size:14px;color:#151515;transform:scaleX(0.943);transform-origin:0 0">disabled TINYINT(1)</div></div><div class="a" style="left:955px;top:484px;width:203px;height:367px;overflow:hidden"><div class="a" style="left:0;top:0;width:203px;height:367px;background:#96bbd9;border-radius:7px;box-shadow:inset 0 0 0 1px #86a9cc"></div><div class="a" style="left:0;top:29px;width:203px;height:1px;background:#8c9fb2"></div><div class="a" style="left:0;top:30px;width:203px;height:300px;background:#fff;border-left:1px solid #9c9c9c;border-right:1px solid #9c9c9c"></div><div class="a" style="left:0;top:330px;width:203px;height:26px;background:#c6c6c6"></div><div class="t" style="left:8px;top:336px;font-size:14.5px;font-weight:bold;color:#f4f4f4">Indexes</div><svg class="a" style="left:182px;top:337px" width="11" height="12"><path d="M1 0L11 6L1 12Z" fill="#6e6e6e"/></svg><svg class="a" style="left:6px;top:5px" width="21" height="21" viewBox="0 0 21 21"><defs><linearGradient id="tig" x1="0" y1="0" x2="1" y2="1"><stop offset="0" stop-color="#f4f8ff"/><stop offset=".5" stop-color="#d2dcf4"/><stop offset="1" stop-color="#a9bde0"/></linearGradient></defs><rect x="3.5" y="2" width="17" height="17.5" rx="2.5" fill="#52627f"/><rect x="2.5" y="3" width="15" height="13.5" fill="url(#tig)"/><rect x="1.5" y="1" width="16" height="2.4" fill="#3c49c2"/><path d="M6.5 5V15M10 5V15M13.5 5V15" stroke="#b9c4e4" stroke-width="1"/></svg><div class="t" style="left:34px;top:8px;font-size:16px;font-weight:bold;color:#0d1a2a">orders</div><svg class="a" style="left:183px;top:9px" width="11" height="10"><path d="M0 0H11L5.5 10Z" fill="#555c66"/></svg><svg class="a" style="left:7px;top:34px" width="9" height="17" viewBox="0 0 9 17"><defs><linearGradient id="kg" x1="0" x2="1"><stop offset="0" stop-color="#e9b818"/><stop offset=".55" stop-color="#ffe55a"/><stop offset="1" stop-color="#e0b010"/></linearGradient></defs><path d="M4.5 0.6C7 0.6 8.2 2.2 8.2 4.6 8.2 7 7 8.8 6 10.5L5.3 15.8H3.7L3 10.5C2 8.8 0.8 7 0.8 4.6 0.8 2.2 2 0.6 4.5 0.6Z" fill="url(#kg)" stroke="#d8a810" stroke-width=".5"/></svg><div class="t" style="left:21px;top:38px;font-size:14px;color:#151515;transform:scaleX(0.943);transform-origin:0 0">order_id INT</div><svg class="a" style="left:6px;top:65px" width="12" height="12" viewBox="0 0 12 12"><path d="M6 1L11 6L6 11L1 6Z" fill="#e07a7a" stroke="#b85a5a" stroke-width="1.1"/></svg><div class="t" style="left:21px;top:65px;font-size:14px;color:#151515;transform:scaleX(0.943);transform-origin:0 0">customer_id INT</div><svg class="a" style="left:6px;top:92px" width="12" height="12" viewBox="0 0 12 12"><path d="M6 1L11 6L6 11L1 6Z" fill="#8fe3ee" stroke="#5bbac8" stroke-width="1.1"/></svg><div class="t" style="left:21px;top:92px;font-size:14px;color:#151515;transform:scaleX(0.943);transform-origin:0 0">order_date DATETIME</div><svg class="a" style="left:6px;top:120px" width="12" height="12" viewBox="0 0 12 12"><path d="M6 1L11 6L6 11L1 6Z" fill="#8fe3ee" stroke="#5bbac8" stroke-width="1.1"/></svg><div class="t" style="left:21px;top:120px;font-size:14px;color:#151515;transform:scaleX(0.943);transform-origin:0 0">ship_amount DECIMAL(10,2)</div><svg class="a" style="left:6px;top:147px" width="12" height="12" viewBox="0 0 12 12"><path d="M6 1L11 6L6 11L1 6Z" fill="#8fe3ee" stroke="#5bbac8" stroke-width="1.1"/></svg><div class="t" style="left:21px;top:147px;font-size:14px;color:#151515;transform:scaleX(0.943);transform-origin:0 0">tax_amount DECIMAL(10,2)</div><svg class="a" style="left:6px;top:174px" width="12" height="12" viewBox="0 0 12 12"><path d="M6 1L11 6L6 11L1 6Z" fill="#ffffff" stroke="#86c4cc" stroke-width="1.1"/></svg><div class="t" style="left:21px;top:174px;font-size:14px;color:#151515;transform:scaleX(0.943);transform-origin:0 0">ship_date DATETIME</div><svg class="a" style="left:6px;top:201px" width="12" height="12" viewBox="0 0 12 12"><path d="M6 1L11 6L6 11L1 6Z" fill="#8fe3ee" stroke="#5bbac8" stroke-width="1.1"/></svg><div class="t" style="left:21px;top:201px;font-size:14px;color:#151515;transform:scaleX(0.943);transform-origin:0 0">ship_address_id INT</div><svg class="a" style="left:6px;top:229px" width="12" height="12" viewBox="0 0 12 12"><path d="M6 1L11 6L6 11L1 6Z" fill="#8fe3ee" stroke="#5bbac8" stroke-width="1.1"/></svg><div class="t" style="left:21px;top:229px;font-size:14px;color:#151515;transform:scaleX(0.943);transform-origin:0 0">card_type VARCHAR(50)</div><svg class="a" style="left:6px;top:256px" width="12" height="12" viewBox="0 0 12 12"><path d="M6 1L11 6L6 11L1 6Z" fill="#8fe3ee" stroke="#5bbac8" stroke-width="1.1"/></svg><div class="t" style="left:21px;top:256px;font-size:14px;color:#151515;transform:scaleX(0.943);transform-origin:0 0">card_number CHAR(16)</div><svg class="a" style="left:6px;top:283px" width="12" height="12" viewBox="0 0 12 12"><path d="M6 1L11 6L6 11L1 6Z" fill="#8fe3ee" stroke="#5bbac8" stroke-width="1.1"/></svg><div class="t" style="left:21px;top:283px;font-size:14px;color:#151515;transform:scaleX(0.943);transform-origin:0 0">card_expires CHAR(7)</div><svg class="a" style="left:6px;top:311px" width="12" height="12" viewBox="0 0 12 12"><path d="M6 1L11 6L6 11L1 6Z" fill="#8fe3ee" stroke="#5bbac8" stroke-width="1.1"/></svg><div class="t" style="left:21px;top:311px;font-size:14px;color:#151515;transform:scaleX(0.943);transform-origin:0 0">billing_address_id INT</div></div><div class="a" style="left:709px;top:726px;width:211px;height:248px;overflow:hidden"><div class="a" style="left:0;top:0;width:211px;height:258px;background:#96bbd9;border-radius:7px;box-shadow:inset 0 0 0 1px #86a9cc"></div><div class="a" style="left:0;top:29px;width:211px;height:1px;background:#8c9fb2"></div><div class="a" style="left:0;top:30px;width:211px;height:191px;background:#fff;border-left:1px solid #9c9c9c;border-right:1px solid #9c9c9c"></div><div class="a" style="left:0;top:221px;width:211px;height:26px;background:#c6c6c6"></div><div class="t" style="left:8px;top:227px;font-size:14.5px;font-weight:bold;color:#f4f4f4">Indexes</div><svg class="a" style="left:190px;top:228px" width="11" height="12"><path d="M1 0L11 6L1 12Z" fill="#6e6e6e"/></svg><svg class="a" style="left:6px;top:5px" width="21" height="21" viewBox="0 0 21 21"><defs><linearGradient id="tig" x1="0" y1="0" x2="1" y2="1"><stop offset="0" stop-color="#f4f8ff"/><stop offset=".5" stop-color="#d2dcf4"/><stop offset="1" stop-color="#a9bde0"/></linearGradient></defs><rect x="3.5" y="2" width="17" height="17.5" rx="2.5" fill="#52627f"/><rect x="2.5" y="3" width="15" height="13.5" fill="url(#tig)"/><rect x="1.5" y="1" width="16" height="2.4" fill="#3c49c2"/><path d="M6.5 5V15M10 5V15M13.5 5V15" stroke="#b9c4e4" stroke-width="1"/></svg><div class="t" style="left:34px;top:8px;font-size:16px;font-weight:bold;color:#0d1a2a">customers</div><svg class="a" style="left:191px;top:9px" width="11" height="10"><path d="M0 0H11L5.5 10Z" fill="#555c66"/></svg><svg class="a" style="left:7px;top:34px" width="9" height="17" viewBox="0 0 9 17"><defs><linearGradient id="kg" x1="0" x2="1"><stop offset="0" stop-color="#e9b818"/><stop offset=".55" stop-color="#ffe55a"/><stop offset="1" stop-color="#e0b010"/></linearGradient></defs><path d="M4.5 0.6C7 0.6 8.2 2.2 8.2 4.6 8.2 7 7 8.8 6 10.5L5.3 15.8H3.7L3 10.5C2 8.8 0.8 7 0.8 4.6 0.8 2.2 2 0.6 4.5 0.6Z" fill="url(#kg)" stroke="#d8a810" stroke-width=".5"/></svg><div class="t" style="left:21px;top:38px;font-size:14px;color:#151515;transform:scaleX(0.943);transform-origin:0 0">customer_id INT</div><svg class="a" style="left:6px;top:65px" width="12" height="12" viewBox="0 0 12 12"><path d="M6 1L11 6L6 11L1 6Z" fill="#8fe3ee" stroke="#5bbac8" stroke-width="1.1"/></svg><div class="t" style="left:21px;top:65px;font-size:14px;color:#151515;transform:scaleX(0.943);transform-origin:0 0">email_address VARCHAR(255)</div><svg class="a" style="left:6px;top:92px" width="12" height="12" viewBox="0 0 12 12"><path d="M6 1L11 6L6 11L1 6Z" fill="#8fe3ee" stroke="#5bbac8" stroke-width="1.1"/></svg><div class="t" style="left:21px;top:92px;font-size:14px;color:#151515;transform:scaleX(0.943);transform-origin:0 0">password VARCHAR(60)</div><svg class="a" style="left:6px;top:120px" width="12" height="12" viewBox="0 0 12 12"><path d="M6 1L11 6L6 11L1 6Z" fill="#8fe3ee" stroke="#5bbac8" stroke-width="1.1"/></svg><div class="t" style="left:21px;top:120px;font-size:14px;color:#151515;transform:scaleX(0.943);transform-origin:0 0">first_name VARCHAR(60)</div><svg class="a" style="left:6px;top:147px" width="12" height="12" viewBox="0 0 12 12"><path d="M6 1L11 6L6 11L1 6Z" fill="#8fe3ee" stroke="#5bbac8" stroke-width="1.1"/></svg><div class="t" style="left:21px;top:147px;font-size:14px;color:#151515;transform:scaleX(0.943);transform-origin:0 0">last_name VARCHAR(60)</div><svg class="a" style="left:6px;top:174px" width="12" height="12" viewBox="0 0 12 12"><path d="M6 1L11 6L6 11L1 6Z" fill="#ffffff" stroke="#86c4cc" stroke-width="1.1"/></svg><div class="t" style="left:21px;top:174px;font-size:14px;color:#151515;transform:scaleX(0.943);transform-origin:0 0">shipping_address_id INT</div><svg class="a" style="left:6px;top:201px" width="12" height="12" viewBox="0 0 12 12"><path d="M6 1L11 6L6 11L1 6Z" fill="#ffffff" stroke="#86c4cc" stroke-width="1.1"/></svg><div class="t" style="left:21px;top:201px;font-size:14px;color:#151515;transform:scaleX(0.943);transform-origin:0 0">billing_address_id INT</div></div><div class="a" style="left:1192px;top:761px;width:229px;height:213px;overflow:hidden"><div class="a" style="left:0;top:0;width:229px;height:231px;background:#96bbd9;border-radius:7px;box-shadow:inset 0 0 0 1px #86a9cc"></div><div class="a" style="left:0;top:29px;width:229px;height:1px;background:#8c9fb2"></div><div class="a" style="left:0;top:30px;width:229px;height:164px;background:#fff;border-left:1px solid #9c9c9c;border-right:1px solid #9c9c9c"></div><div class="a" style="left:0;top:194px;width:229px;height:26px;background:#c6c6c6"></div><div class="t" style="left:8px;top:200px;font-size:14.5px;font-weight:bold;color:#f4f4f4">Indexes</div><svg class="a" style="left:208px;top:201px" width="11" height="12"><path d="M1 0L11 6L1 12Z" fill="#6e6e6e"/></svg><svg class="a" style="left:6px;top:5px" width="21" height="21" viewBox="0 0 21 21"><defs><linearGradient id="tig" x1="0" y1="0" x2="1" y2="1"><stop offset="0" stop-color="#f4f8ff"/><stop offset=".5" stop-color="#d2dcf4"/><stop offset="1" stop-color="#a9bde0"/></linearGradient></defs><rect x="3.5" y="2" width="17" height="17.5" rx="2.5" fill="#52627f"/><rect x="2.5" y="3" width="15" height="13.5" fill="url(#tig)"/><rect x="1.5" y="1" width="16" height="2.4" fill="#3c49c2"/><path d="M6.5 5V15M10 5V15M13.5 5V15" stroke="#b9c4e4" stroke-width="1"/></svg><div class="t" style="left:34px;top:8px;font-size:16px;font-weight:bold;color:#0d1a2a">order_items</div><svg class="a" style="left:209px;top:9px" width="11" height="10"><path d="M0 0H11L5.5 10Z" fill="#555c66"/></svg><svg class="a" style="left:7px;top:34px" width="9" height="17" viewBox="0 0 9 17"><defs><linearGradient id="kg" x1="0" x2="1"><stop offset="0" stop-color="#e9b818"/><stop offset=".55" stop-color="#ffe55a"/><stop offset="1" stop-color="#e0b010"/></linearGradient></defs><path d="M4.5 0.6C7 0.6 8.2 2.2 8.2 4.6 8.2 7 7 8.8 6 10.5L5.3 15.8H3.7L3 10.5C2 8.8 0.8 7 0.8 4.6 0.8 2.2 2 0.6 4.5 0.6Z" fill="url(#kg)" stroke="#d8a810" stroke-width=".5"/></svg><div class="t" style="left:21px;top:38px;font-size:14px;color:#151515;transform:scaleX(0.943);transform-origin:0 0">item_id INT</div><svg class="a" style="left:6px;top:65px" width="12" height="12" viewBox="0 0 12 12"><path d="M6 1L11 6L6 11L1 6Z" fill="#e07a7a" stroke="#b85a5a" stroke-width="1.1"/></svg><div class="t" style="left:21px;top:65px;font-size:14px;color:#151515;transform:scaleX(0.943);transform-origin:0 0">order_id INT</div><svg class="a" style="left:6px;top:92px" width="12" height="12" viewBox="0 0 12 12"><path d="M6 1L11 6L6 11L1 6Z" fill="#e07a7a" stroke="#b85a5a" stroke-width="1.1"/></svg><div class="t" style="left:21px;top:92px;font-size:14px;color:#151515;transform:scaleX(0.943);transform-origin:0 0">product_id INT</div><svg class="a" style="left:6px;top:120px" width="12" height="12" viewBox="0 0 12 12"><path d="M6 1L11 6L6 11L1 6Z" fill="#8fe3ee" stroke="#5bbac8" stroke-width="1.1"/></svg><div class="t" style="left:21px;top:120px;font-size:14px;color:#151515;transform:scaleX(0.943);transform-origin:0 0">item_price DECIMAL(10,2)</div><svg class="a" style="left:6px;top:147px" width="12" height="12" viewBox="0 0 12 12"><path d="M6 1L11 6L6 11L1 6Z" fill="#8fe3ee" stroke="#5bbac8" stroke-width="1.1"/></svg><div class="t" style="left:21px;top:147px;font-size:14px;color:#151515;transform:scaleX(0.943);transform-origin:0 0">discount_amount DECIMAL(10,2)</div><svg class="a" style="left:6px;top:174px" width="12" height="12" viewBox="0 0 12 12"><path d="M6 1L11 6L6 11L1 6Z" fill="#8fe3ee" stroke="#5bbac8" stroke-width="1.1"/></svg><div class="t" style="left:21px;top:174px;font-size:14px;color:#151515;transform:scaleX(0.943);transform-origin:0 0">quantity INT</div></div><svg class="a" style="left:0;top:0" width="1920" height="1030"><path d="M1008.5 344 L1008.5 440 L1290 440" fill="none" stroke="#5a5a5a" stroke-width="2.2" stroke-dasharray="14 6"/><path d="M1008.5 323V344" fill="none" stroke="#5a5a5a" stroke-width="2.2"/><path d="M1003 330H1014M1003 335H1014" fill="none" stroke="#5a5a5a" stroke-width="2"/><path d="M1286 440H1306" fill="none" stroke="#5a5a5a" stroke-width="2.2"/><path d="M1291 434V447" fill="none" stroke="#5a5a5a" stroke-width="2"/><path d="M1295 440L1306 434M1295 440L1306 446" fill="none" stroke="#5a5a5a" stroke-width="1.5"/><path d="M611 590H630" fill="none" stroke="#5a5a5a" stroke-width="2.2"/><path d="M611 584L622 590L611 596" fill="none" stroke="#5a5a5a" stroke-width="1.5"/><path d="M625 584V597" fill="none" stroke="#5a5a5a" stroke-width="2"/><path d="M636 590 L778.5 590 L778.5 712" fill="none" stroke="#5a5a5a" stroke-width="2.2" stroke-dasharray="14 6"/><path d="M778.5 706V726" fill="none" stroke="#5a5a5a" stroke-width="2.2"/><path d="M773 712H784M773 718H784" fill="none" stroke="#5a5a5a" stroke-width="2"/><path d="M848.5 712 L848.5 666 L935 666" fill="none" stroke="#5a5a5a" stroke-width="2.2" stroke-dasharray="14 6"/><path d="M848.5 706V726" fill="none" stroke="#5a5a5a" stroke-width="2.2"/><path d="M843 712H854M843 718H854" fill="none" stroke="#5a5a5a" stroke-width="2"/><path d="M930 666H955" fill="none" stroke="#5a5a5a" stroke-width="2.2"/><path d="M940 660V673" fill="none" stroke="#5a5a5a" stroke-width="2"/><path d="M944 666L955 660M944 666L955 672" fill="none" stroke="#5a5a5a" stroke-width="1.5"/><path d="M1158 666H1175" fill="none" stroke="#5a5a5a" stroke-width="2.2"/><path d="M1165 661V672M1170 661V672" fill="none" stroke="#5a5a5a" stroke-width="2"/><path d="M1180 666 L1267.5 666 L1267.5 745" fill="none" stroke="#5a5a5a" stroke-width="2.2" stroke-dasharray="14 6"/><path d="M1267.5 740V761" fill="none" stroke="#5a5a5a" stroke-width="2.2"/><path d="M1261 745.5H1274" fill="none" stroke="#5a5a5a" stroke-width="2"/><path d="M1267.5 748L1261 761M1267.5 748L1274 761" fill="none" stroke="#5a5a5a" stroke-width="1.5"/><path d="M1421.5 583V600" fill="none" stroke="#5a5a5a" stroke-width="2.2"/><path d="M1416 590H1427M1416 595H1427" fill="none" stroke="#5a5a5a" stroke-width="2"/><path d="M1421.5 605 L1421.5 671 L1343.5 671 L1343.5 740" fill="none" stroke="#5a5a5a" stroke-width="2.2" stroke-dasharray="14 6"/><path d="M1343.5 740V761" fill="none" stroke="#5a5a5a" stroke-width="2.2"/><path d="M1337 745.5H1350" fill="none" stroke="#5a5a5a" stroke-width="2"/><path d="M1343.5 748L1337 761M1343.5 748L1350 761" fill="none" stroke="#5a5a5a" stroke-width="1.5"/></svg><div class="a" style="left:1663px;top:131px;width:249px;height:30px;background:#e6e6e6"></div><div class="t" style="left:1672px;top:139px;font-size:13.8px;color:#6f6f6f">Modeling Additions</div><div class="a" style="left:1794px;top:143px;width:113px;height:7px;background-image:radial-gradient(circle at 1px 1px,#b4b4b4 0.8px,transparent 1.1px),radial-gradient(circle at 3.5px 3.5px,#b4b4b4 0.8px,transparent 1.1px);background-size:5px 5px"></div><div class="a" style="left:1663px;top:161px;width:249px;height:810px;background:#fff"></div><div class="a" style="left:1666px;top:165px;width:243px;height:28px;background:#f2f2f4"></div><svg class="a" style="left:1684px;top:170px" width="22" height="21" viewBox="0 0 22 21">
<rect x="1" y="1" width="16" height="15" fill="#cfdcf2" stroke="#5a7dc0"/><rect x="1" y="1" width="16" height="2.5" fill="#3d6fd0"/>
<path d="M5 4V15M9 4V15M13 4V15" stroke="#8aa6d8" stroke-width="1.3"/><path d="M10 19L19 11" stroke="#e0702a" stroke-width="3"/><path d="M16 14L20 10" stroke="#999" stroke-width="1.5"/></svg><div class="a" style="left:1715px;top:171px;width:1px;height:18px;background:#555"></div><svg class="a" style="left:1723px;top:169px" width="22" height="22" viewBox="0 0 22 22">
<rect x="2" y="3" width="19" height="18" fill="#b9cdee" stroke="#6a86c2"/><rect x="2" y="3" width="19" height="3" fill="#4a5fd0"/>
<path d="M7 6V20M11.5 6V20M16 6V20" stroke="#8aa6d8" stroke-width="1.4"/><circle cx="4" cy="4" r="3.5" fill="#f5e04a"/></svg><svg class="a" style="left:1672px;top:209px" width="48" height="30" viewBox="0 0 48 30">
<rect x="1" y="1" width="46" height="28" rx="3" fill="#f7f7f7" stroke="#b5b5b5" stroke-width="1.2"/>
<path d="M13 4 L15.6 10 L22 10.6 L17.2 14.8 L18.7 21 L13 17.6 L7.3 21 L8.8 14.8 L4 10.6 L10.4 10 Z" fill="#f0c030" stroke="#c99a1a" stroke-width=".8"/>
<rect x="19" y="16" width="25" height="11" fill="#f4f4f4" stroke="#777" stroke-width="1"/>
<text x="21" y="25" font-family="Liberation Sans" font-size="8.5" font-weight="bold" fill="#333">MWB</text></svg><div class="t" style="left:1730px;top:208px;font-size:15px;font-weight:bold;color:#111">timestamps</div><div class="t" style="left:1730px;top:227px;font-size:13.4px;color:#222">create_time, update_time</div><svg class="a" style="left:1672px;top:272px" width="48" height="30" viewBox="0 0 48 30">
<rect x="1" y="1" width="46" height="28" rx="3" fill="#f7f7f7" stroke="#b5b5b5" stroke-width="1.2"/>
<path d="M13 4 L15.6 10 L22 10.6 L17.2 14.8 L18.7 21 L13 17.6 L7.3 21 L8.8 14.8 L4 10.6 L10.4 10 Z" fill="#f0c030" stroke="#c99a1a" stroke-width=".8"/>
<rect x="19" y="16" width="25" height="11" fill="#f4f4f4" stroke="#777" stroke-width="1"/>
<text x="21" y="25" font-family="Liberation Sans" font-size="8.5" font-weight="bold" fill="#333">MWB</text></svg><div class="t" style="left:1730px;top:271px;font-size:15px;font-weight:bold;color:#111">user</div><div class="t" style="left:1730px;top:290px;font-size:13.4px;color:#222">username, email, passwor...</div><svg class="a" style="left:1672px;top:334px" width="48" height="30" viewBox="0 0 48 30">
<rect x="1" y="1" width="46" height="28" rx="3" fill="#f7f7f7" stroke="#b5b5b5" stroke-width="1.2"/>
<path d="M13 4 L15.6 10 L22 10.6 L17.2 14.8 L18.7 21 L13 17.6 L7.3 21 L8.8 14.8 L4 10.6 L10.4 10 Z" fill="#f0c030" stroke="#c99a1a" stroke-width=".8"/>
<rect x="19" y="16" width="25" height="11" fill="#f4f4f4" stroke="#777" stroke-width="1"/>
<text x="21" y="25" font-family="Liberation Sans" font-size="8.5" font-weight="bold" fill="#333">MWB</text></svg><div class="t" style="left:1730px;top:333px;font-size:15px;font-weight:bold;color:#111">category</div><div class="t" style="left:1730px;top:352px;font-size:13.4px;color:#222">category_id, name</div><div class="a" style="left:1666px;top:255px;width:240px;height:2px;background:#e0e0e0"></div><div class="a" style="left:1666px;top:318px;width:240px;height:2px;background:#e0e0e0"></div><div class="a" style="left:1666px;top:380px;width:240px;height:2px;background:#e0e0e0"></div><div class="a" style="left:1663px;top:971px;width:249px;height:24px;background:#e6e6e6"></div><div class="a" style="left:1663px;top:971px;width:84px;height:24px;background:#fff"></div><div class="t" style="left:1672px;top:976px;font-size:14px;color:#3d80c4">Templates</div></body></html>
